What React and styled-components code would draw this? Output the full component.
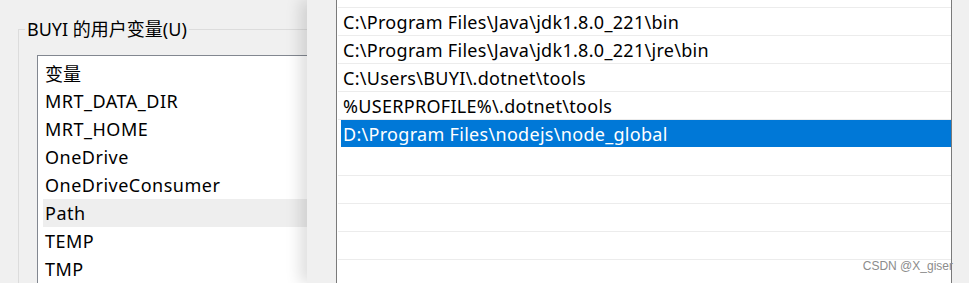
import React from "react";
import styled, { createGlobalStyle } from "styled-components";

const Global = createGlobalStyle`
  html, body { margin: 0; padding: 0; background: #f0f0f0; }
  body { width: 969px; height: 283px; overflow: hidden; }
  * { box-sizing: border-box; }
`;

const FONT = `"Noto Sans", "Noto Sans CJK SC", sans-serif`;

const Screen = styled.div`
  position: relative;
  display: flex;
  width: 969px;
  height: 283px;
  overflow: hidden;
  background: #f0f0f0;
  font-family: ${FONT};
  font-size: 18px;
  color: #000;
`;

const LeftWindow = styled.div`
  flex: 0 0 307px;
  overflow: hidden;
  padding: 18px 0 0 18px;
  background: #f0f0f0;
`;

const GroupBox = styled.fieldset`
  margin: 0;
  padding: 0 0 0 6px;
  width: 420px;
  height: 400px;
  border: 1px solid #dcdcdc;
  min-width: 0;
`;

const GroupLabel = styled.legend`
  padding: 0 2px;
  line-height: 22px;
  font-size: 18px;
`;

const LeftList = styled.div`
  margin: 15px 0 0 12px;
  height: 300px;
  background: #fff;
  border-top: 1px solid #828790;
  border-left: 1px solid #828790;
  padding: 3px 0 0 5px;
`;

const VarRow = styled.div`
  height: 28px;
  display: flex;
  align-items: center;
  padding-left: 2px;
  letter-spacing: ${(p) => (p.$cjk ? "0" : "0.5px")};
  background: ${(p) => (p.$hover ? "#eeeeee" : "transparent")};
`;

const RightWindow = styled.div`
  position: relative;
  z-index: 1;
  flex: 1;
  padding-left: 29px;
  background: #f0f0f0;
  box-shadow: -7px 0 14px rgba(0, 0, 0, 0.13);
`;

const PathList = styled.div`
  width: 616px;
  height: 330px;
  margin-top: -21px;
  background: #fff;
  border: 1px solid #7a7a7a;
`;

const PathRow = styled.div`
  margin-left: 1px;
  height: 28px;
  border-bottom: 1px solid ${(p) => (p.$selected ? "#fff" : "#ececec")};
`;

const PathItem = styled.div`
  height: 27px;
  margin-left: 3px;
  padding-left: 2px;
  display: flex;
  align-items: center;
  white-space: nowrap;
  letter-spacing: 0.3px;
  background: ${(p) => (p.$selected ? "#0078d7" : "transparent")};
  color: ${(p) => (p.$selected ? "#fff" : "#000")};
`;

const Watermark = styled.div`
  position: absolute;
  right: 16px;
  top: 259px;
  font-family: "Liberation Sans", Arial, sans-serif;
  font-size: 12px;
  color: #8c8c8c;
  z-index: 2;
`;

const vars = [
  "变量",
  "MRT_DATA_DIR",
  "MRT_HOME",
  "OneDrive",
  "OneDriveConsumer",
  "Path",
  "TEMP",
  "TMP",
];

const paths = [
  "",
  "C:\\Program Files\\Java\\jdk1.8.0_221\\bin",
  "C:\\Program Files\\Java\\jdk1.8.0_221\\jre\\bin",
  "C:\\Users\\BUYI\\.dotnet\\tools",
  "%USERPROFILE%\\.dotnet\\tools",
  "D:\\Program Files\\nodejs\\node_global",
  "",
  "",
  "",
  "",
  "",
];

export default function App() {
  return (
    <>
      <Global />
      <Screen>
        <LeftWindow>
          <GroupBox>
            <GroupLabel>BUYI 的用户变量(U)</GroupLabel>
            <LeftList>
              {vars.map((v, i) => (
                <VarRow key={v} $hover={v === "Path"} $cjk={i === 0}>
                  {v}
                </VarRow>
              ))}
            </LeftList>
          </GroupBox>
        </LeftWindow>
        <RightWindow>
          <PathList>
            {paths.map((p, i) => (
              <PathRow key={i} $selected={i === 5}>
                <PathItem $selected={i === 5}>{p}</PathItem>
              </PathRow>
            ))}
          </PathList>
        </RightWindow>
        <Watermark>CSDN @X_giser</Watermark>
      </Screen>
    </>
  );
}
